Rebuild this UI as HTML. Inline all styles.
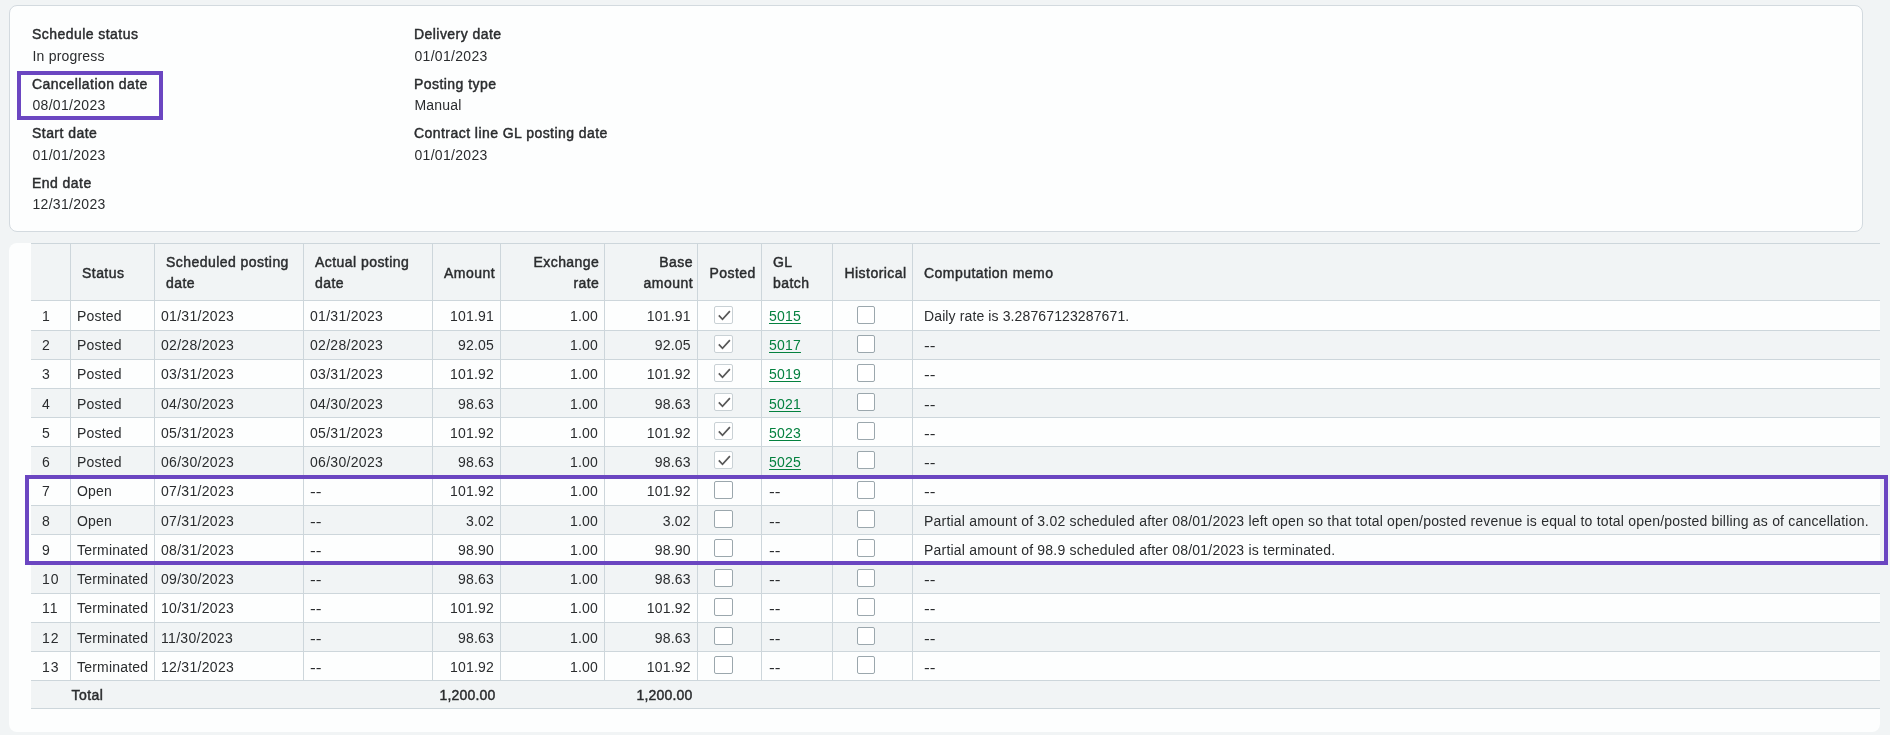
<!DOCTYPE html>
<html><head><meta charset="utf-8"><style>
*{margin:0;padding:0;box-sizing:border-box}
html,body{width:1890px;height:735px;overflow:hidden;background:#f1f4f5}
body{letter-spacing:0.2px;position:relative;font-family:"Liberation Sans",sans-serif;font-size:14px;color:#2a2c2e;line-height:16px}
.a{position:absolute;white-space:nowrap}
.tl{position:absolute;left:0;top:0;width:1890px;height:735px;will-change:transform}
.b{-webkit-text-stroke:0.45px #2a2c2e;letter-spacing:0.45px}
.r{text-align:right}
.d{letter-spacing:0.3px}
.m{letter-spacing:0.2px}
.t{letter-spacing:0.2px}
.m2{letter-spacing:0.12px}
.n{letter-spacing:1px}
.dd{letter-spacing:0;transform:translateY(1px) scaleX(1.23);transform-origin:0 0}
.card{position:absolute;left:9px;top:5px;width:1854px;height:227px;border:1px solid #d3dadf;border-radius:8px;background:#fdfefe}
.card2{position:absolute;left:9px;top:243px;width:1871px;height:489px;border-radius:8px;background:#fdfefe}
.hl{position:absolute;height:1px;background:#cdd6db}
.vl{position:absolute;width:1px;background:#cdd6db}
.bgr{position:absolute;background:#f1f4f5}
.cb{position:absolute;width:18px;height:18px;border:1px solid #9ba7ad;border-radius:2px;background:#fff}
.cbc{border-color:#c9d1d5}
.lk{color:#04813f;text-decoration:underline;text-underline-offset:2px}
.pb{position:absolute;border:4px solid #6b46c1}
</style></head>
<body>
<div class="card"></div>
<div class="card2"></div>
<div class="bgr" style="left:31px;top:243px;width:1849px;height:57px"></div>
<div class="bgr" style="left:31px;top:330px;width:1849px;height:29px"></div>
<div class="bgr" style="left:31px;top:388px;width:1849px;height:29px"></div>
<div class="bgr" style="left:31px;top:446px;width:1849px;height:29px"></div>
<div class="bgr" style="left:31px;top:505px;width:1849px;height:29px"></div>
<div class="bgr" style="left:31px;top:563px;width:1849px;height:30px"></div>
<div class="bgr" style="left:31px;top:622px;width:1849px;height:29px"></div>
<div class="bgr" style="left:31px;top:680px;width:1849px;height:28px"></div>
<div class="hl" style="left:31px;top:243px;width:1849px"></div>
<div class="hl" style="left:31px;top:300px;width:1849px"></div>
<div class="hl" style="left:31px;top:330px;width:1849px"></div>
<div class="hl" style="left:31px;top:359px;width:1849px"></div>
<div class="hl" style="left:31px;top:388px;width:1849px"></div>
<div class="hl" style="left:31px;top:417px;width:1849px"></div>
<div class="hl" style="left:31px;top:446px;width:1849px"></div>
<div class="hl" style="left:31px;top:475px;width:1849px"></div>
<div class="hl" style="left:31px;top:505px;width:1849px"></div>
<div class="hl" style="left:31px;top:534px;width:1849px"></div>
<div class="hl" style="left:31px;top:563px;width:1849px"></div>
<div class="hl" style="left:31px;top:593px;width:1849px"></div>
<div class="hl" style="left:31px;top:622px;width:1849px"></div>
<div class="hl" style="left:31px;top:651px;width:1849px"></div>
<div class="hl" style="left:31px;top:680px;width:1849px"></div>
<div class="hl" style="left:31px;top:708px;width:1849px"></div>
<div class="vl" style="left:70px;top:243px;height:437px"></div>
<div class="vl" style="left:154px;top:243px;height:437px"></div>
<div class="vl" style="left:303px;top:243px;height:437px"></div>
<div class="vl" style="left:432px;top:243px;height:437px"></div>
<div class="vl" style="left:500px;top:243px;height:437px"></div>
<div class="vl" style="left:604px;top:243px;height:437px"></div>
<div class="vl" style="left:697px;top:243px;height:437px"></div>
<div class="vl" style="left:761px;top:243px;height:437px"></div>
<div class="vl" style="left:832px;top:243px;height:437px"></div>
<div class="vl" style="left:912px;top:243px;height:437px"></div>
<div class="cb cbc" style="left:714px;top:306px;width:19px"><svg width="16" height="16" style="position:absolute;left:0;top:0"><path d="M3.8 8.3 L7.5 12.3 L14.9 4.1" fill="none" stroke="#585858" stroke-width="1.7"/></svg></div>
<div class="cb" style="left:857px;top:306px"></div>
<div class="cb cbc" style="left:714px;top:335px;width:19px"><svg width="16" height="16" style="position:absolute;left:0;top:0"><path d="M3.8 8.3 L7.5 12.3 L14.9 4.1" fill="none" stroke="#585858" stroke-width="1.7"/></svg></div>
<div class="cb" style="left:857px;top:335px"></div>
<div class="cb cbc" style="left:714px;top:364px;width:19px"><svg width="16" height="16" style="position:absolute;left:0;top:0"><path d="M3.8 8.3 L7.5 12.3 L14.9 4.1" fill="none" stroke="#585858" stroke-width="1.7"/></svg></div>
<div class="cb" style="left:857px;top:364px"></div>
<div class="cb cbc" style="left:714px;top:393px;width:19px"><svg width="16" height="16" style="position:absolute;left:0;top:0"><path d="M3.8 8.3 L7.5 12.3 L14.9 4.1" fill="none" stroke="#585858" stroke-width="1.7"/></svg></div>
<div class="cb" style="left:857px;top:393px"></div>
<div class="cb cbc" style="left:714px;top:422px;width:19px"><svg width="16" height="16" style="position:absolute;left:0;top:0"><path d="M3.8 8.3 L7.5 12.3 L14.9 4.1" fill="none" stroke="#585858" stroke-width="1.7"/></svg></div>
<div class="cb" style="left:857px;top:422px"></div>
<div class="cb cbc" style="left:714px;top:451px;width:19px"><svg width="16" height="16" style="position:absolute;left:0;top:0"><path d="M3.8 8.3 L7.5 12.3 L14.9 4.1" fill="none" stroke="#585858" stroke-width="1.7"/></svg></div>
<div class="cb" style="left:857px;top:451px"></div>
<div class="cb" style="left:714px;top:481px;width:19px"></div>
<div class="cb" style="left:857px;top:481px"></div>
<div class="cb" style="left:714px;top:510px;width:19px"></div>
<div class="cb" style="left:857px;top:510px"></div>
<div class="cb" style="left:714px;top:539px;width:19px"></div>
<div class="cb" style="left:857px;top:539px"></div>
<div class="cb" style="left:714px;top:569px;width:19px"></div>
<div class="cb" style="left:857px;top:569px"></div>
<div class="cb" style="left:714px;top:598px;width:19px"></div>
<div class="cb" style="left:857px;top:598px"></div>
<div class="cb" style="left:714px;top:627px;width:19px"></div>
<div class="cb" style="left:857px;top:627px"></div>
<div class="cb" style="left:714px;top:656px;width:19px"></div>
<div class="cb" style="left:857px;top:656px"></div>
<div class="tl"><div class="a b" style="left:32px;top:25.95px">Schedule status</div>
<div class="a " style="left:32.5px;top:47.95px">In progress</div>
<div class="a b" style="left:32px;top:75.95px">Cancellation date</div>
<div class="a d" style="left:32.5px;top:97.15px">08/01/2023</div>
<div class="a b" style="left:32px;top:124.95px">Start date</div>
<div class="a d" style="left:32.5px;top:147.15px">01/01/2023</div>
<div class="a b" style="left:32px;top:174.95px">End date</div>
<div class="a d" style="left:32.5px;top:195.95px">12/31/2023</div>
<div class="a b" style="left:414px;top:25.95px">Delivery date</div>
<div class="a d" style="left:414.5px;top:47.95px">01/01/2023</div>
<div class="a b" style="left:414px;top:75.95px">Posting type</div>
<div class="a " style="left:414.5px;top:97.15px">Manual</div>
<div class="a b" style="left:414px;top:124.95px">Contract line GL posting date</div>
<div class="a d" style="left:414.5px;top:147.15px">01/01/2023</div>
<div class="a b" style="left:82px;top:265.15px">Status</div>
<div class="a b" style="left:166px;top:254.35px">Scheduled posting</div>
<div class="a b" style="left:166px;top:275.35px">date</div>
<div class="a b" style="left:315px;top:254.35px">Actual posting</div>
<div class="a b" style="left:315px;top:275.35px">date</div>
<div class="a r b" style="right:1395px;top:265.15px">Amount</div>
<div class="a r b" style="right:1290.7px;top:254.35px">Exchange</div>
<div class="a r b" style="right:1290.7px;top:275.35px">rate</div>
<div class="a r b" style="right:1197px;top:254.35px">Base</div>
<div class="a r b" style="right:1197px;top:275.35px">amount</div>
<div class="a b" style="left:709.5px;top:265.15px">Posted</div>
<div class="a b" style="left:773px;top:254.35px">GL</div>
<div class="a b" style="left:773px;top:275.35px">batch</div>
<div class="a b" style="left:844.5px;top:265.15px">Historical</div>
<div class="a b" style="left:924px;top:265.15px">Computation memo</div>
<div class="a " style="left:42px;top:308.15px">1</div>
<div class="a " style="left:77px;top:308.15px">Posted</div>
<div class="a d" style="left:161px;top:308.15px">01/31/2023</div>
<div class="a d" style="left:310px;top:308.15px">01/31/2023</div>
<div class="a r " style="right:1396px;top:308.15px">101.91</div>
<div class="a r " style="right:1292px;top:308.15px">1.00</div>
<div class="a r " style="right:1199.2px;top:308.15px">101.91</div>
<div class="a " style="left:769px;top:308.15px"><span class="lk">5015</span></div>
<div class="a m2" style="left:924px;top:308.15px">Daily rate is 3.28767123287671.</div>
<div class="a " style="left:42px;top:337.15px">2</div>
<div class="a " style="left:77px;top:337.15px">Posted</div>
<div class="a d" style="left:161px;top:337.15px">02/28/2023</div>
<div class="a d" style="left:310px;top:337.15px">02/28/2023</div>
<div class="a r " style="right:1396px;top:337.15px">92.05</div>
<div class="a r " style="right:1292px;top:337.15px">1.00</div>
<div class="a r " style="right:1199.2px;top:337.15px">92.05</div>
<div class="a " style="left:769px;top:337.15px"><span class="lk">5017</span></div>
<div class="a dd" style="left:924px;top:337.15px">--</div>
<div class="a " style="left:42px;top:366.15px">3</div>
<div class="a " style="left:77px;top:366.15px">Posted</div>
<div class="a d" style="left:161px;top:366.15px">03/31/2023</div>
<div class="a d" style="left:310px;top:366.15px">03/31/2023</div>
<div class="a r " style="right:1396px;top:366.15px">101.92</div>
<div class="a r " style="right:1292px;top:366.15px">1.00</div>
<div class="a r " style="right:1199.2px;top:366.15px">101.92</div>
<div class="a " style="left:769px;top:366.15px"><span class="lk">5019</span></div>
<div class="a dd" style="left:924px;top:366.15px">--</div>
<div class="a " style="left:42px;top:396.15px">4</div>
<div class="a " style="left:77px;top:396.15px">Posted</div>
<div class="a d" style="left:161px;top:396.15px">04/30/2023</div>
<div class="a d" style="left:310px;top:396.15px">04/30/2023</div>
<div class="a r " style="right:1396px;top:396.15px">98.63</div>
<div class="a r " style="right:1292px;top:396.15px">1.00</div>
<div class="a r " style="right:1199.2px;top:396.15px">98.63</div>
<div class="a " style="left:769px;top:396.15px"><span class="lk">5021</span></div>
<div class="a dd" style="left:924px;top:396.15px">--</div>
<div class="a " style="left:42px;top:425.15px">5</div>
<div class="a " style="left:77px;top:425.15px">Posted</div>
<div class="a d" style="left:161px;top:425.15px">05/31/2023</div>
<div class="a d" style="left:310px;top:425.15px">05/31/2023</div>
<div class="a r " style="right:1396px;top:425.15px">101.92</div>
<div class="a r " style="right:1292px;top:425.15px">1.00</div>
<div class="a r " style="right:1199.2px;top:425.15px">101.92</div>
<div class="a " style="left:769px;top:425.15px"><span class="lk">5023</span></div>
<div class="a dd" style="left:924px;top:425.15px">--</div>
<div class="a " style="left:42px;top:454.15px">6</div>
<div class="a " style="left:77px;top:454.15px">Posted</div>
<div class="a d" style="left:161px;top:454.15px">06/30/2023</div>
<div class="a d" style="left:310px;top:454.15px">06/30/2023</div>
<div class="a r " style="right:1396px;top:454.15px">98.63</div>
<div class="a r " style="right:1292px;top:454.15px">1.00</div>
<div class="a r " style="right:1199.2px;top:454.15px">98.63</div>
<div class="a " style="left:769px;top:454.15px"><span class="lk">5025</span></div>
<div class="a dd" style="left:924px;top:454.15px">--</div>
<div class="a " style="left:42px;top:483.15px">7</div>
<div class="a " style="left:77px;top:483.15px">Open</div>
<div class="a d" style="left:161px;top:483.15px">07/31/2023</div>
<div class="a dd" style="left:310px;top:483.15px">--</div>
<div class="a r " style="right:1396px;top:483.15px">101.92</div>
<div class="a r " style="right:1292px;top:483.15px">1.00</div>
<div class="a r " style="right:1199.2px;top:483.15px">101.92</div>
<div class="a dd" style="left:769px;top:483.15px">--</div>
<div class="a dd" style="left:924px;top:483.15px">--</div>
<div class="a " style="left:42px;top:513.15px">8</div>
<div class="a " style="left:77px;top:513.15px">Open</div>
<div class="a d" style="left:161px;top:513.15px">07/31/2023</div>
<div class="a dd" style="left:310px;top:513.15px">--</div>
<div class="a r " style="right:1396px;top:513.15px">3.02</div>
<div class="a r " style="right:1292px;top:513.15px">1.00</div>
<div class="a r " style="right:1199.2px;top:513.15px">3.02</div>
<div class="a dd" style="left:769px;top:513.15px">--</div>
<div class="a m" style="left:924px;top:513.15px">Partial amount of 3.02 scheduled after 08/01/2023 left open so that total open/posted revenue is equal to total open/posted billing as of cancellation.</div>
<div class="a " style="left:42px;top:542.15px">9</div>
<div class="a " style="left:77px;top:542.15px">Terminated</div>
<div class="a d" style="left:161px;top:542.15px">08/31/2023</div>
<div class="a dd" style="left:310px;top:542.15px">--</div>
<div class="a r " style="right:1396px;top:542.15px">98.90</div>
<div class="a r " style="right:1292px;top:542.15px">1.00</div>
<div class="a r " style="right:1199.2px;top:542.15px">98.90</div>
<div class="a dd" style="left:769px;top:542.15px">--</div>
<div class="a m" style="left:924px;top:542.15px">Partial amount of 98.9 scheduled after 08/01/2023 is terminated.</div>
<div class="a n" style="left:42px;top:571.15px">10</div>
<div class="a " style="left:77px;top:571.15px">Terminated</div>
<div class="a d" style="left:161px;top:571.15px">09/30/2023</div>
<div class="a dd" style="left:310px;top:571.15px">--</div>
<div class="a r " style="right:1396px;top:571.15px">98.63</div>
<div class="a r " style="right:1292px;top:571.15px">1.00</div>
<div class="a r " style="right:1199.2px;top:571.15px">98.63</div>
<div class="a dd" style="left:769px;top:571.15px">--</div>
<div class="a dd" style="left:924px;top:571.15px">--</div>
<div class="a n" style="left:42px;top:600.15px">11</div>
<div class="a " style="left:77px;top:600.15px">Terminated</div>
<div class="a d" style="left:161px;top:600.15px">10/31/2023</div>
<div class="a dd" style="left:310px;top:600.15px">--</div>
<div class="a r " style="right:1396px;top:600.15px">101.92</div>
<div class="a r " style="right:1292px;top:600.15px">1.00</div>
<div class="a r " style="right:1199.2px;top:600.15px">101.92</div>
<div class="a dd" style="left:769px;top:600.15px">--</div>
<div class="a dd" style="left:924px;top:600.15px">--</div>
<div class="a n" style="left:42px;top:630.15px">12</div>
<div class="a " style="left:77px;top:630.15px">Terminated</div>
<div class="a d" style="left:161px;top:630.15px">11/30/2023</div>
<div class="a dd" style="left:310px;top:630.15px">--</div>
<div class="a r " style="right:1396px;top:630.15px">98.63</div>
<div class="a r " style="right:1292px;top:630.15px">1.00</div>
<div class="a r " style="right:1199.2px;top:630.15px">98.63</div>
<div class="a dd" style="left:769px;top:630.15px">--</div>
<div class="a dd" style="left:924px;top:630.15px">--</div>
<div class="a n" style="left:42px;top:659.15px">13</div>
<div class="a " style="left:77px;top:659.15px">Terminated</div>
<div class="a d" style="left:161px;top:659.15px">12/31/2023</div>
<div class="a dd" style="left:310px;top:659.15px">--</div>
<div class="a r " style="right:1396px;top:659.15px">101.92</div>
<div class="a r " style="right:1292px;top:659.15px">1.00</div>
<div class="a r " style="right:1199.2px;top:659.15px">101.92</div>
<div class="a dd" style="left:769px;top:659.15px">--</div>
<div class="a dd" style="left:924px;top:659.15px">--</div>
<div class="a b" style="left:71.5px;top:686.95px">Total</div>
<div class="a r b t" style="right:1394.5px;top:686.95px">1,200.00</div>
<div class="a r b t" style="right:1197.4px;top:686.95px">1,200.00</div></div>
<div class="pb" style="left:17px;top:71px;width:146px;height:49px"></div>
<div class="pb" style="left:25px;top:475px;width:1863px;height:90px"></div>
</body></html>
